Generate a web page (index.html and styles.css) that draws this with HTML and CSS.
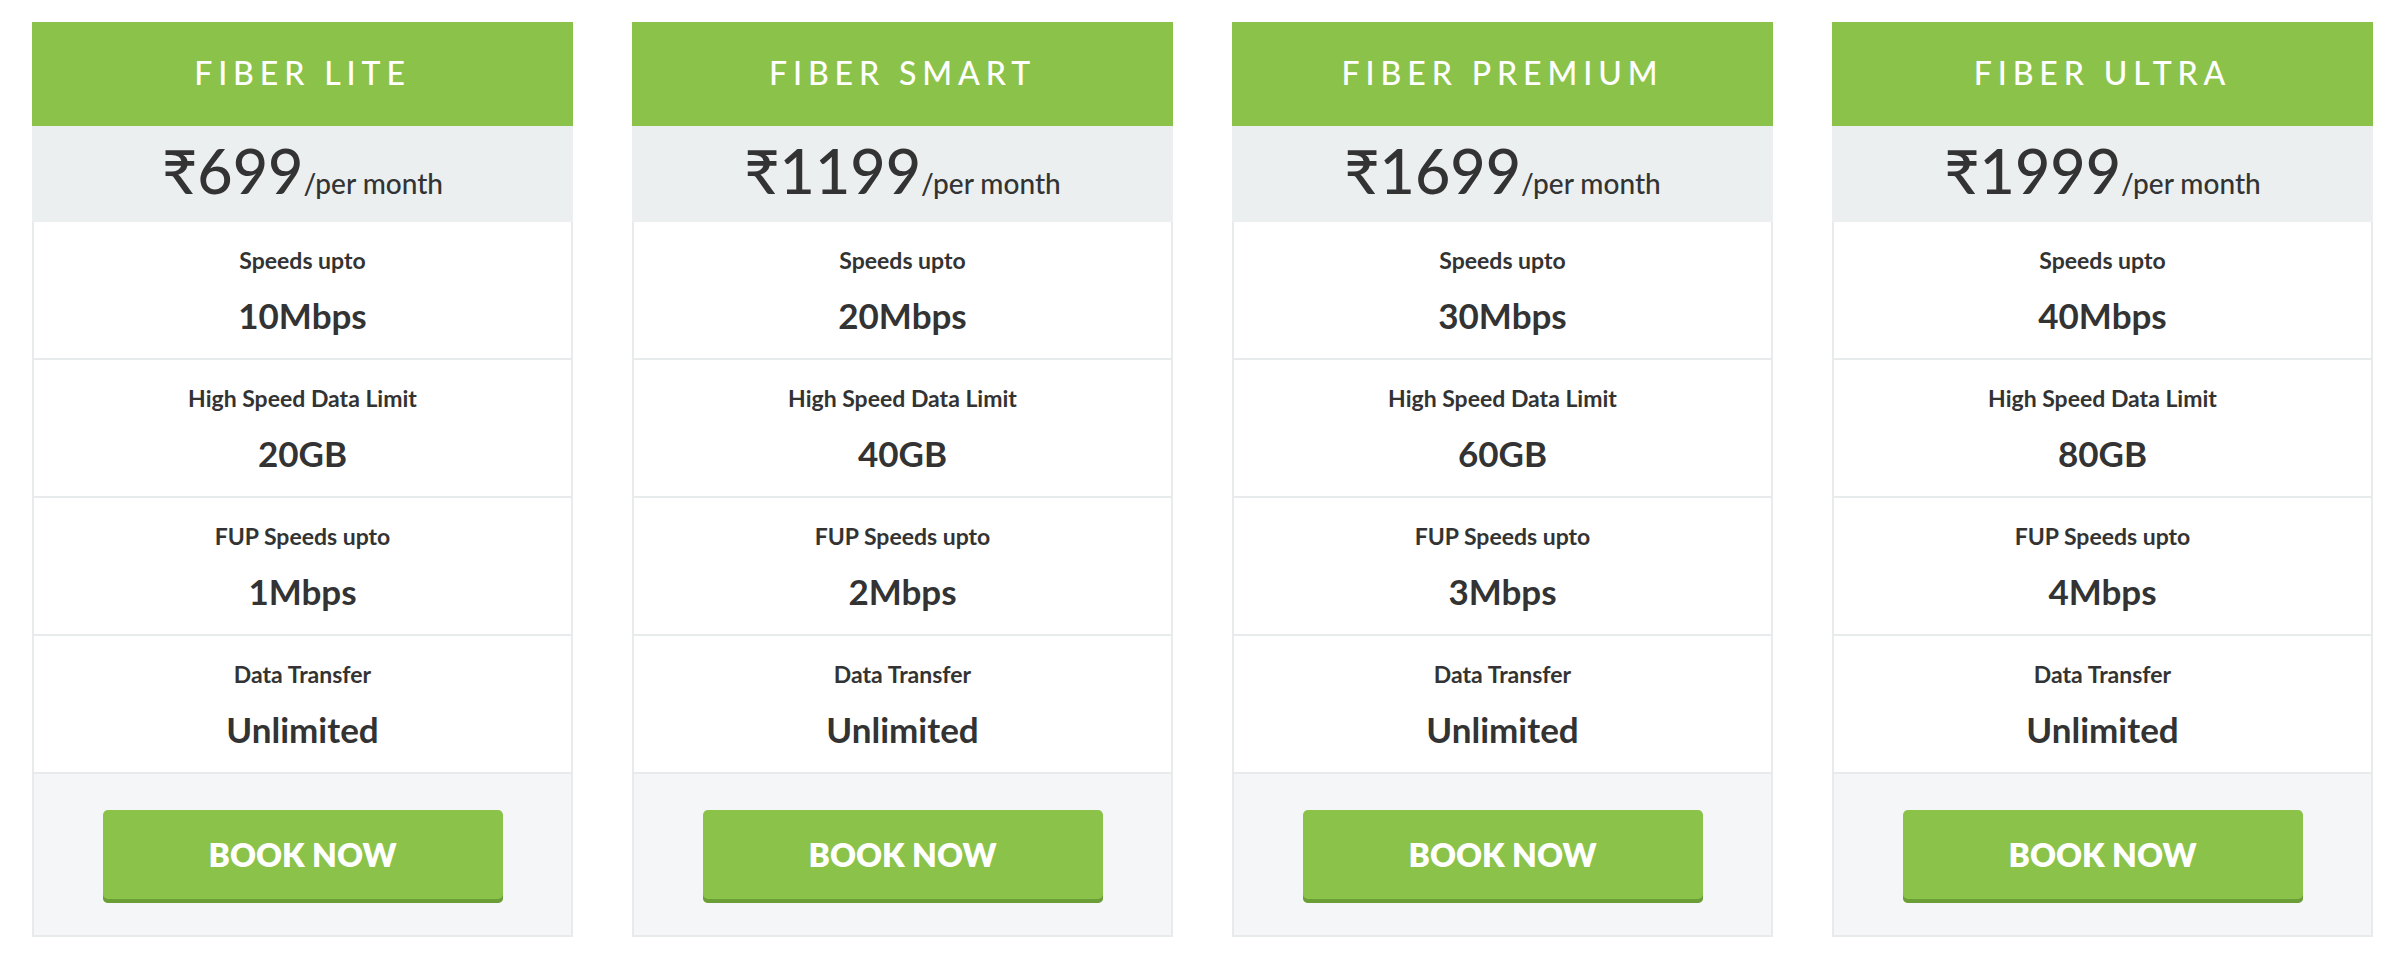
FILE: index.html
```html
<!DOCTYPE html>
<html lang="en">
<head>
<meta charset="utf-8">
<title>Fiber Plans</title>
<link rel="stylesheet" href="styles.css">
</head>
<body>
<div class="plans">
  <div class="card">
    <div class="card-head">FIBER LITE</div>
    <div class="price"><span class="amount">₹699</span><span class="per">/per month</span></div>
    <div class="row"><div class="label">Speeds upto</div><div class="value">10Mbps</div></div>
    <div class="row"><div class="label">High Speed Data Limit</div><div class="value">20GB</div></div>
    <div class="row"><div class="label">FUP Speeds upto</div><div class="value">1Mbps</div></div>
    <div class="row"><div class="label">Data Transfer</div><div class="value">Unlimited</div></div>
    <div class="card-foot"><a class="btn" href="#">BOOK NOW</a></div>
  </div>
  <div class="card">
    <div class="card-head">FIBER SMART</div>
    <div class="price"><span class="amount">₹1199</span><span class="per">/per month</span></div>
    <div class="row"><div class="label">Speeds upto</div><div class="value">20Mbps</div></div>
    <div class="row"><div class="label">High Speed Data Limit</div><div class="value">40GB</div></div>
    <div class="row"><div class="label">FUP Speeds upto</div><div class="value">2Mbps</div></div>
    <div class="row"><div class="label">Data Transfer</div><div class="value">Unlimited</div></div>
    <div class="card-foot"><a class="btn" href="#">BOOK NOW</a></div>
  </div>
  <div class="card">
    <div class="card-head">FIBER PREMIUM</div>
    <div class="price"><span class="amount">₹1699</span><span class="per">/per month</span></div>
    <div class="row"><div class="label">Speeds upto</div><div class="value">30Mbps</div></div>
    <div class="row"><div class="label">High Speed Data Limit</div><div class="value">60GB</div></div>
    <div class="row"><div class="label">FUP Speeds upto</div><div class="value">3Mbps</div></div>
    <div class="row"><div class="label">Data Transfer</div><div class="value">Unlimited</div></div>
    <div class="card-foot"><a class="btn" href="#">BOOK NOW</a></div>
  </div>
  <div class="card">
    <div class="card-head">FIBER ULTRA</div>
    <div class="price"><span class="amount">₹1999</span><span class="per">/per month</span></div>
    <div class="row"><div class="label">Speeds upto</div><div class="value">40Mbps</div></div>
    <div class="row"><div class="label">High Speed Data Limit</div><div class="value">80GB</div></div>
    <div class="row"><div class="label">FUP Speeds upto</div><div class="value">4Mbps</div></div>
    <div class="row"><div class="label">Data Transfer</div><div class="value">Unlimited</div></div>
    <div class="card-foot"><a class="btn" href="#">BOOK NOW</a></div>
  </div>
</div>
</body>
</html>
```
FILE: styles.css
```css
* { box-sizing: border-box; }
html, body { margin: 0; padding: 0; background: #fff; }
body {
  font-family: Lato, "Noto Sans", "DejaVu Sans", sans-serif;
  color: #333;
}
.plans {
  display: grid;
  grid-template-columns: repeat(4, 541px);
  column-gap: 59px;
  padding: 22px 0 0 32px;
}
.card {
  display: flex;
  flex-direction: column;
  text-align: center;
}
.card-head {
  background: #8bc34a;
  color: #fff;
  font-size: 32px;
  font-weight: 500;
  line-height: 38px;
  letter-spacing: 5.9px;
  padding: 32px 0 34px;
}
.price {
  background: #ebeff0;
  padding: 10px 0 16px;
  font-size: 61px;
  font-weight: 500;
  line-height: 70px;
  white-space: nowrap;
}
.amount {
  font-size: 61px;
}
.per {
  font-size: 28px;
  font-weight: 500;
  line-height: 1;
}
.row {
  background: #fff;
  border: 2px solid #e7ebec;
  border-top: none;
  padding: 24px 0 22px;
}
.label {
  font-size: 23px;
  font-weight: 700;
  line-height: 28px;
  margin-bottom: 20px;
}
.value {
  font-size: 35px;
  font-weight: 700;
  line-height: 42px;
}
.card-foot {
  background: #f5f6f8;
  border: 2px solid #e7ebec;
  border-top: none;
  padding: 36px 0 32px;
  display: flex;
  justify-content: center;
}
.btn {
  display: block;
  width: 400px;
  height: 93px;
  background: #8bc34a;
  border-radius: 5px;
  box-shadow: inset 0 -4px 0 #6c9e38;
  color: #fff;
  font-size: 32px;
  font-weight: 800;
  line-height: 89px;
  text-decoration: none;
  padding-bottom: 4px;
}
```
